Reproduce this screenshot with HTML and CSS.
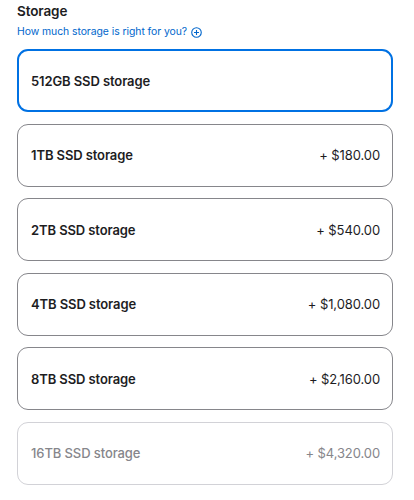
FILE: index.html
```html
<!DOCTYPE html>
<html>
<head>
<meta charset="utf-8">
<link rel="stylesheet" href="styles.css">
</head>
<body>
<div class="page">
  <h2 class="title">Storage</h2>
  <a class="help" href="#">How much storage is right for you? <svg class="plus" width="11" height="11" viewBox="0 0 12 12"><circle cx="6" cy="6" r="5.2" fill="none" stroke="currentColor" stroke-width="1.2"/><path d="M6 3.3v5.4M3.3 6h5.4" stroke="currentColor" stroke-width="1.2" fill="none"/></svg></a>
  <div class="options">
    <div class="opt selected"><span class="name">512GB SSD storage</span></div>
    <div class="opt"><span class="name">1TB SSD storage</span><span class="price">+ $180.00</span></div>
    <div class="opt"><span class="name">2TB SSD storage</span><span class="price">+ $540.00</span></div>
    <div class="opt"><span class="name">4TB SSD storage</span><span class="price">+ $1,080.00</span></div>
    <div class="opt"><span class="name">8TB SSD storage</span><span class="price">+ $2,160.00</span></div>
    <div class="opt disabled"><span class="name">16TB SSD storage</span><span class="price">+ $4,320.00</span></div>
  </div>
</div>
</body>
</html>
```
FILE: styles.css
```css
html, body { margin: 0; padding: 0; background: #fff; }
body { font-family: Inter, "Liberation Sans", sans-serif; color: #1d1d1f; }
.page { padding: 2px 21px 0 17px; }
.title { margin: 0; font-size: 13.5px; font-weight: 600; line-height: 18px; letter-spacing: -0.1px; }
.help { display: flex; align-items: center; gap: 4px; margin-top: 5px; font-size: 10.4px; line-height: 14px; color: #0066cc; text-decoration: none; letter-spacing: -0.05px; }
.plus { display: block; }
.options { display: flex; flex-direction: column; gap: 11.6px; margin-top: 10px; }
.opt { box-sizing: border-box; height: 63px; border: 1px solid #86868b; border-radius: 11px; display: flex; align-items: center; justify-content: space-between; padding: 0 12px 0 13px; font-size: 13px; }
.opt.selected { border: 2px solid #0071e3; padding-left: 12px; }
.name { font-weight: 600; letter-spacing: -0.1px; }
.price { font-weight: 400; letter-spacing: -0.1px; }
.opt.disabled { border-color: #d2d2d7; color: #86868b; }
.opt.disabled .name { font-weight: 500; }
```
